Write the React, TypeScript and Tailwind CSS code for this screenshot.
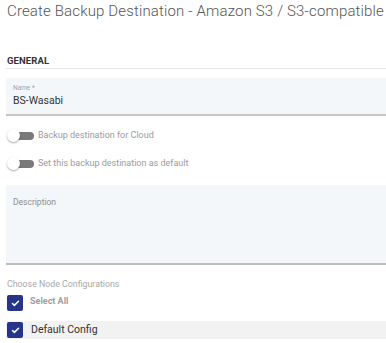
import { Check } from 'lucide-react';

function Toggle({ label }: { label: string }) {
  return (
    <div className="flex items-center h-[14px]">
      <div className="relative w-[28px] h-[14px] shrink-0">
        <div className="absolute left-[6px] top-[3px] w-[21px] h-[8px] rounded-r-full bg-[#7a7a7a]" />
        <div className="absolute left-0 top-0 w-[13px] h-[13px] rounded-full bg-white shadow-[0_1px_2px_rgba(0,0,0,0.35)]" />
      </div>
      <span className="ml-[3px] text-[9px] text-[#9a9a9a]">{label}</span>
    </div>
  );
}

function CheckBox() {
  return (
    <div className="w-[16px] h-[16px] rounded-[2px] bg-[#26358c] flex items-center justify-center shrink-0">
      <Check className="w-[9px] h-[9px] text-white" strokeWidth={4} />
    </div>
  );
}

export default function App() {
  return (
    <div className="w-[386px] h-[343px] bg-white overflow-hidden pl-[6px] font-['Roboto',sans-serif]">
      {/* Encabezado */}
      <h1 className="pt-[1px] pl-[1px] text-[15px] leading-[20px] font-light tracking-[0.15px] text-[#555] whitespace-nowrap">
        Create Backup Destination - Amazon S3 / S3-compatible
      </h1>

      <div className="mt-[35px] pl-[1px] text-[9.5px] leading-[10px] font-bold text-[#333] tracking-[0.1px]">
        GENERAL
      </div>
      <div className="mt-[2px] h-px bg-[#e6e6e6]" />

      {/* Nombre */}
      <div className="mt-[9px] h-[38px] bg-[#f4f7fa] border-b-2 border-[#c6c6c6] pl-[7px] pt-[6px]">
        <div className="text-[6.5px] leading-[8px] text-[#a3a3a3]">Name *</div>
        <div className="mt-[2px] text-[10.5px] leading-[13px] text-[#333]">BS-Wasabi</div>
      </div>

      {/* Toggles */}
      <div className="mt-[13px] pl-px flex flex-col gap-[14px]">
        <Toggle label="Backup destination for Cloud" />
        <Toggle label="Set this backup destination as default" />
      </div>

      {/* Descripción */}
      <div className="mt-[14px] h-[80px] bg-[#f4f7fa] border-b-2 border-[#bdbdbd] pl-[7px] pt-[11px]">
        <div className="text-[8.5px] leading-[12px] text-[#8e8e8e]">Description</div>
      </div>

      {/* Configuraciones */}
      <div className="mt-[13px] pl-px text-[8.8px] leading-[12px] text-[#a8a8a8]">Choose Node Configurations</div>
      <div className="mt-[5px] pl-px flex items-center">
        <CheckBox />
        <span className="ml-[7px] text-[9px] font-bold text-[#a0a0a0] -mt-[2px]">Select All</span>
      </div>
      <div className="mt-[10px] h-[18px] bg-[#f2f2f2] pl-px flex items-center">
        <CheckBox />
        <span className="ml-[8px] text-[10.5px] text-[#333]">Default Config</span>
      </div>
    </div>
  );
}
